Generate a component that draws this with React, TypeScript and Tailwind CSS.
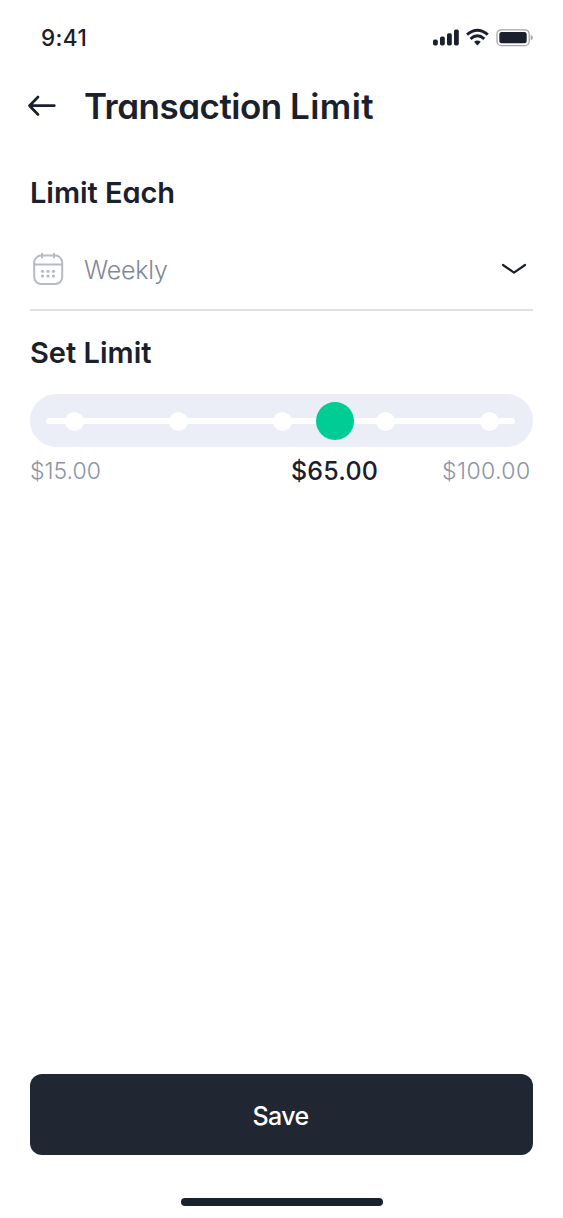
import React from "react";

const STOPS = [0, 1, 2, 3, 4];

function StatusBar() {
  return (
    <header className="flex h-[74px] items-center justify-between pr-[30px] pl-[41px]">
      <span className="pt-px text-[22.5px] leading-6 font-medium tracking-[0.4px]">9:41</span>
      <svg width="102" height="24" viewBox="0 0 102 24" fill="none">
        <g fill="#1a202c">
          <rect x="2" y="14.5" width="4.8" height="6" rx="1.7" />
          <rect x="9" y="11.5" width="4.8" height="9" rx="1.7" />
          <rect x="16" y="8.3" width="4.8" height="12.2" rx="1.7" />
          <rect x="23" y="4.5" width="4.8" height="16" rx="1.7" />
        </g>
        <g stroke="#1a202c" strokeWidth="2.9">
          <path d="M36 9.7Q46.4 0.9 56.8 9.7" />
          <path d="M39.5 13.8Q46.4 7.8 53.3 13.8" />
        </g>
        <path d="M43 16.8Q46.4 14.1 49.8 16.8L46.9 20.1Q46.4 20.5 45.9 20.1Z" fill="#1a202c" />
        <rect x="66" y="4.8" width="32.2" height="15.8" rx="4.2" stroke="#a3a6ab" strokeWidth="1.3" />
        <rect x="68.3" y="7.1" width="27.4" height="11.2" rx="2.4" fill="#1a202c" />
        <path d="M99.7 10.1Q101.9 10.8 101.9 12.7Q101.9 14.6 99.7 15.3Z" fill="#a3a6ab" />
      </svg>
    </header>
  );
}

function CalendarIcon() {
  return (
    <svg width="36" height="36" viewBox="0 0 36 36" fill="none" stroke="#b6bbc4" strokeWidth="2">
      <rect x="4.2" y="4.6" width="28" height="28.4" rx="7" />
      <path d="M4.2 13.4h28M12 2v5.2M24 2v5.2" />
      <g fill="#b6bbc4" stroke="none">
        {[12.5, 18, 23.5].map((x) => (
          <React.Fragment key={x}>
            <circle cx={x} cy="20.3" r="1.6" />
            <circle cx={x} cy="25.1" r="1.6" />
          </React.Fragment>
        ))}
      </g>
    </svg>
  );
}

export default function App() {
  return (
    <main className="flex h-[1218px] w-[563px] flex-col bg-white font-['Inter',sans-serif] text-[#1a202c] [font-feature-settings:'cv11']">
      <StatusBar />

      <div className="flex h-16 items-center pl-[27px]">
        <button aria-label="Back" className="flex w-[57px]">
          <svg width="30" height="24" viewBox="0 0 30 24" fill="none" stroke="#1a202c" strokeWidth="2.7" strokeLinecap="round" strokeLinejoin="round">
            <path d="M27.3 11.7H2.5M11 3L2.5 11.7L11 20.5" />
          </svg>
        </button>
        <h1 className="text-[35px] leading-10 font-semibold tracking-[-0.5px] whitespace-nowrap">
          Transaction <span className="tracking-[0.4px]">Limit</span>
        </h1>
      </div>

      <section className="mx-[30px] mt-[34px] w-[503px]">
        <h2 className="h-10 pt-px text-[29px] leading-10 font-semibold tracking-[-0.05px] whitespace-nowrap">Limit Each</h2>
        <button className="flex h-[99px] w-full items-center border-b-2 border-[#e0e1e4] pt-[17px] text-left">
          <CalendarIcon />
          <span className="ml-[18px] pt-px text-[25px] leading-8 font-light tracking-[-0.2px] text-[#7f889a]">Weekly</span>
          <svg className="mr-1.5 ml-auto" width="26" height="14" viewBox="0 0 26 14" fill="none" stroke="#1a202c" strokeWidth="2.2" strokeLinecap="round" strokeLinejoin="round">
            <path d="M2 3L13 10.6L24 3" />
          </svg>
        </button>
      </section>

      <section className="mx-[30px] mt-[22px] w-[503px]">
        <h2 className="h-10 text-[29px] leading-10 font-semibold whitespace-nowrap">Set Limit</h2>
        <div className="relative mt-[21px] flex h-[53px] items-center rounded-full bg-[#ebeef7] pt-px pr-[18px] pl-4">
          <div className="flex h-1.5 w-full items-center justify-between rounded-full bg-white pr-4 pl-[19px]">
            {STOPS.map((stop) => (
              <span key={stop} className="size-[19px] rounded-full bg-white" />
            ))}
          </div>
          <span className="absolute top-[7.5px] left-[286px] size-[38px] rounded-full bg-[#00cd96]" />
        </div>
        <div className="flex h-12 items-center text-[23px] font-light text-[#8d94a6]">
          <span className="w-[261px]">$15.00</span>
          <span className="w-[151px] pt-0.5 text-[25px] font-medium tracking-[0.2px] text-[#1a202c]">$65.00</span>
          <span className="tracking-[0.4px]">$100.00</span>
        </div>
      </section>

      <footer className="mt-auto flex flex-col items-center pb-3">
        <button className="h-[81px] w-[503px] rounded-xl bg-[#202733] pt-1 pr-0.5 text-[25px] font-medium tracking-[-0.6px] text-white [font-feature-settings:normal]">Save</button>
        <div className="mt-[43px] h-2 w-[202px] rounded-full bg-[#1a202c]" />
      </footer>
    </main>
  );
}
